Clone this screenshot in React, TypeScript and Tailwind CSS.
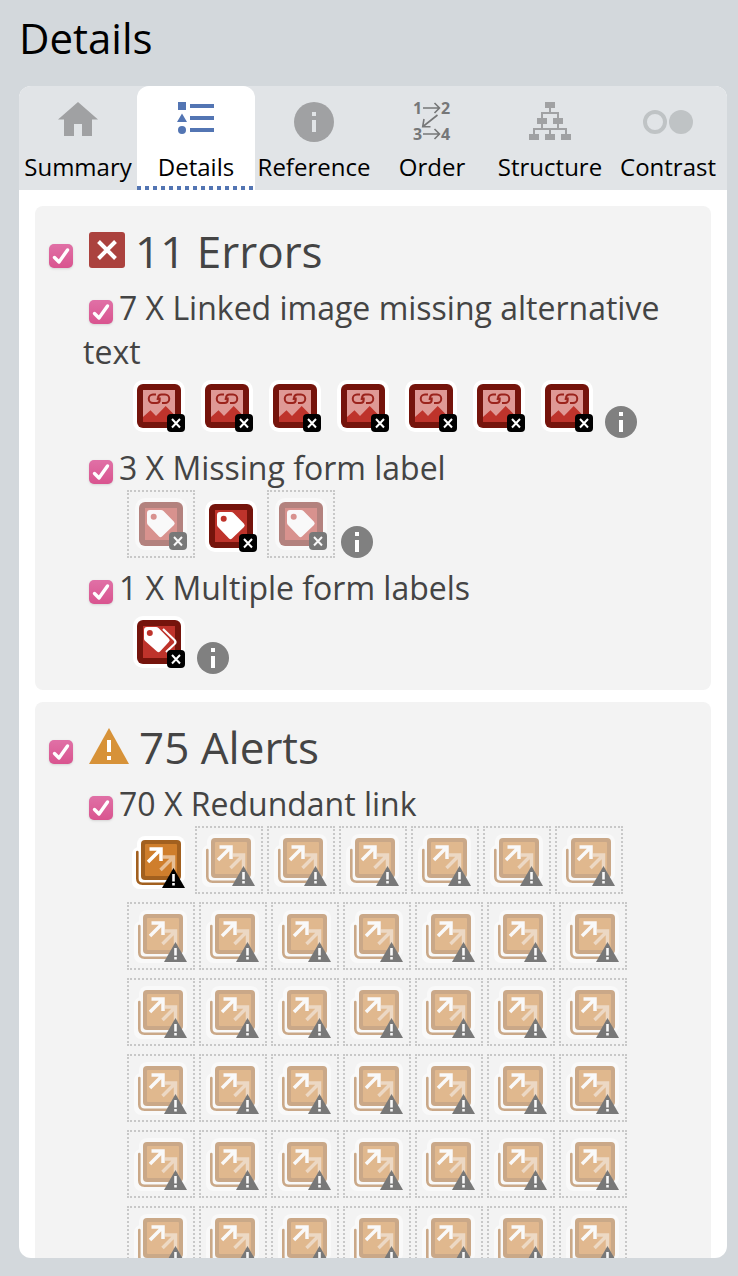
import React, { useState } from "react";

const tabs = ["Summary", "Details", "Reference", "Order", "Structure", "Contrast"] as const;
type TabName = (typeof tabs)[number];

function TabIcon({ name }: { name: TabName }) {
  return (
    <svg viewBox="0 0 64 48" className="h-12 w-16 shrink-0" aria-hidden="true">
      {name === "Summary" && (
        <path fill="#a0a1a3" d="M32 4 52 21.500H46V38H36V26H28V38H18V21.500H12Z" />
      )}
      {name === "Details" && (
        <g fill="#5375b3">
          <path d="M14 4h8v8h-8zM18 15.500 23 24H13zM26 6h24v4H26zM26 18h24v4H26zM26 30h24v4H26z" />
          <circle cx="18" cy="32" r="4" />
        </g>
      )}
      {name === "Reference" && (
        <>
          <circle cx="32" cy="24" r="20" fill="#a0a1a3" />
          <path fill="#e1e4e7" d="M30 14h4v4h-4zM30 22h4v12h-4z" />
        </>
      )}
      {name === "Order" && (
        <>
          <g fill="#767778" fontSize="16" fontWeight="700" fontFamily="Open Sans, sans-serif">
            <text x="13" y="16">1</text>
            <text x="41" y="16">2</text>
            <text x="13" y="42">3</text>
            <text x="41" y="42">4</text>
          </g>
          <path
            fill="none"
            stroke="#767778"
            strokeWidth="1.6"
            d="M23 10H39M34.500 5 39.500 10 34.500 15M23 36H39M34.500 31 39.500 36 34.500 41M37.500 17 23 28.500M24 21 22.700 28.600 30.500 28.800"
          />
        </>
      )}
      {name === "Structure" && (
        <>
          <path fill="#a0a1a3" d="M27 4h10v6H27zM19 20h10v6H19zM35 20h10v6H35zM11 36h10v6H11zM27 36h10v6H27zM43 36h10v6H43z" />
          <path fill="none" stroke="#a0a1a3" strokeWidth="2" d="M32 10V15M24 20V15H40V20M24 26V31M40 26V31M16 36V31H48V36M32 31V36" />
        </>
      )}
      {name === "Contrast" && (
        <>
          <circle cx="19" cy="24" r="10" fill="none" stroke="#bfc3c5" strokeWidth="4" />
          <circle cx="45" cy="24" r="12" fill="#bfc3c5" />
        </>
      )}
    </svg>
  );
}

function Check({ label, className }: { label: string; className: string }) {
  return (
    <span className={`relative inline-block size-6 ${className}`}>
      <input
        type="checkbox"
        defaultChecked
        aria-label={label}
        className="peer block size-6 appearance-none rounded-[5px] bg-white shadow-sm checked:bg-linear-to-b checked:from-[#e070a6] checked:to-[#d9548f]"
      />
      <svg viewBox="0 0 24 24" className="pointer-events-none absolute inset-0 hidden size-6 peer-checked:block" aria-hidden="true">
        <path d="M5.500 13.500 10 18 18.500 6" fill="none" stroke="#fff" strokeWidth="3.400" strokeLinecap="round" strokeLinejoin="round" />
      </svg>
    </span>
  );
}

type Kind = "image" | "label" | "labels" | "link";

function ErrorGlyph({ kind }: { kind: Kind }) {
  return (
    <g transform="translate(6 6)">
      <rect width="52" height="52" rx="10" fill="#fff" />
      <rect x="4" y="4" width="44" height="44" rx="6" fill="#75140c" />
      <rect x="10" y="10" width="32" height="32" fill="#be332b" />
      {kind === "image" && (
        <>
          <path fill="#df9995" d="M10 10H42V35.500L32.700 26 23 36 17.500 30.300 10 37Z" />
          <path
            fill="none"
            stroke="#9b231c"
            strokeWidth="2"
            d="M23 14.500H20a4.200 4.200 0 0 0 0 8.500h3.500c2.200 0 3.200-1.200 3.200-3V17.500M29 23H32a4.200 4.200 0 0 0 0-8.500h-3.500c-2.200 0-3.200 1.200-3.500 3L24.500 20"
          />
        </>
      )}
      {kind === "label" && (
        <>
          <path fill="#fff" d="M15 12H26Q27.500 12 28.500 13L39 23.800Q40.500 25.500 39 27L27 38.500Q25.500 40 24 38.500L13 27Q12 26 12 24.500V15Q12 12 15 12Z" />
          <circle cx="18.700" cy="18.700" r="3" fill="#be332b" />
        </>
      )}
      {kind === "labels" && (
        <>
          <path fill="#fff" d="M14 11H23Q24.500 11 25.500 12L36 22.800Q37.500 24.200 36 25.800L27 35.500Q25.500 37 24 35.500L12.200 25Q11 24 11 22.500V14Q11 11 14 11Z" />
          <circle cx="16.800" cy="17" r="3" fill="#be332b" />
          <path fill="none" stroke="#fff" strokeWidth="2.200" d="M30 13 41.500 24Q43.500 26 41.500 28L33 36" />
        </>
      )}
      <rect x="34" y="34" width="18" height="18" rx="4" fill="#000" />
      <path stroke="#fff" strokeWidth="2" d="M39 39 47 47.500M47 39 39 47.500" />
    </g>
  );
}

function LinkGlyph() {
  return (
    <>
      <rect x="5" y="17" width="50" height="42" rx="7" fill="#fff" />
      <rect x="10" y="6" width="48" height="48" rx="8" fill="#fff" />
      <path fill="none" stroke="#a2601f" strokeWidth="2.600" strokeLinecap="round" d="M10.300 22V48.500Q10.300 53.700 15.500 53.700H48" />
      <rect x="14" y="10" width="40" height="40" rx="4" fill="#a2601f" />
      <rect x="18" y="14" width="32" height="32" rx="1" fill="#cf7e2c" />
      <path fill="none" stroke="#fff" strokeOpacity=".5" strokeWidth="3.500" d="M36 27H46.500V40M33.500 40 46 27.500" />
      <path fill="none" stroke="#fff" strokeWidth="3.500" d="M22.500 19H34V31M21 32 33.500 19.500" />
      <path fill="#000" d="M46.500 38 58 58H35Z" />
      <path fill="#fff" d="M45.200 44h2.600v7.500h-2.600zM45.200 53h2.600v2.500h-2.600z" />
    </>
  );
}

function Marker({ kind, hiddenItem, label }: { kind: Kind; hiddenItem?: boolean; label: string }) {
  return (
    <button type="button" aria-label={label} className={hiddenItem ? "border-2 border-dotted border-[#c8c8c8]" : ""}>
      <svg viewBox="0 0 64 64" className={`block size-16 ${hiddenItem ? "opacity-50" : ""}`} aria-hidden="true">
        {kind === "link" ? <LinkGlyph /> : <ErrorGlyph kind={kind} />}
      </svg>
    </button>
  );
}

function InfoButton({ label }: { label: string }) {
  return (
    <button type="button" aria-label={`About ${label}`} className="ml-0.5">
      <svg viewBox="0 0 32 32" className="block size-8" aria-hidden="true">
        <circle cx="16" cy="16" r="16" fill="#808080" />
        <path fill="#fff" d="M14 6h4v4h-4zM14 14h4v12h-4z" />
      </svg>
    </button>
  );
}

interface Item {
  count: number;
  title: string;
  kind: Kind;
  visible: number[];
}

function ItemRow({ item }: { item: Item }) {
  return (
    <li className="mb-2">
      <h3 className="text-[32px] leading-[44px]">
        <Check label={item.title} className="ml-1.5 mr-1.5 align-[-4px]" />
        {`${item.count} X ${item.title}`}
      </h3>
      <div className="ml-11 flex max-w-[516px] flex-wrap items-end gap-x-1 gap-y-2">
        {Array.from({ length: item.count }, (_, i) => (
          <Marker key={i} kind={item.kind} label={item.title} hiddenItem={!item.visible.includes(i)} />
        ))}
        <InfoButton label={item.title} />
      </div>
    </li>
  );
}

function Group({ title, icon, items }: { title: string; icon: React.ReactNode; items: Item[] }) {
  return (
    <section className="shrink-0 rounded-lg bg-[#f3f3f3] px-3.5 pb-2 pt-4 text-[#444]">
      <h2 className="flex h-16 items-start text-[44px] leading-[58px]">
        <Check label={title} className="mt-[22px]" />
        <span className="ml-4 mr-2.5 mt-2.5">{icon}</span>
        {title}
      </h2>
      <ul className="pl-[34px]">
        {items.map((item) => (
          <ItemRow key={item.title} item={item} />
        ))}
      </ul>
    </section>
  );
}

const errors: Item[] = [
  { count: 7, title: "Linked image missing alternative text", kind: "image", visible: [0, 1, 2, 3, 4, 5, 6] },
  { count: 3, title: "Missing form label", kind: "label", visible: [1] },
  { count: 1, title: "Multiple form labels", kind: "labels", visible: [0] },
];

const alerts: Item[] = [{ count: 70, title: "Redundant link", kind: "link", visible: [0] }];

export default function App() {
  const [active, setActive] = useState<TabName>("Details");
  return (
    <main className="flex h-screen flex-col bg-[#d3d8dc] pb-[18px] pl-[19px] pr-[11px] font-['Open_Sans',sans-serif]">
      <h1 className="h-[86px] shrink-0 pt-2 text-[42px] leading-[60px] text-black">{active}</h1>
      <div className="flex min-h-0 flex-1 flex-col overflow-hidden rounded-xl bg-white">
        <div role="tablist" className="grid shrink-0 grid-cols-6 bg-[#e1e4e7]">
          {tabs.map((tab) => (
            <button
              key={tab}
              type="button"
              role="tab"
              aria-selected={tab === active}
              onClick={() => setActive(tab)}
              className={`flex h-[104px] flex-col items-center pt-3 text-2xl text-black ${
                tab === active ? "rounded-t-xl bg-white" : ""
              }`}
            >
              <TabIcon name={tab} />
              <span className="mt-[5px] whitespace-nowrap">{tab}</span>
              {tab === active && (
                <span className="mt-auto h-1 w-full bg-[repeating-linear-gradient(to_right,#5375b3_0_4px,transparent_4px_8px)]" />
              )}
            </button>
          ))}
        </div>
        <div className="flex min-h-0 flex-1 flex-col gap-3 overflow-hidden px-4 pt-4">
          <Group
            title="11 Errors"
            icon={
              <svg viewBox="0 0 36 36" className="block size-9" aria-hidden="true">
                <rect width="36" height="36" rx="3" fill="#ab423e" />
                <path stroke="#fff" strokeWidth="4" d="M9.500 9.500 26.500 26.500M26.500 9.500 9.500 26.500" />
              </svg>
            }
            items={errors}
          />
          <Group
            title="75 Alerts"
            icon={
              <svg viewBox="0 0 40 36" className="block h-9 w-10" aria-hidden="true">
                <path fill="#d79238" d="M20 0 40 36H0Z" />
                <path fill="#fff" d="M18 12h4v12h-4zM18 28h4v4h-4z" />
              </svg>
            }
            items={alerts}
          />
        </div>
      </div>
    </main>
  );
}
